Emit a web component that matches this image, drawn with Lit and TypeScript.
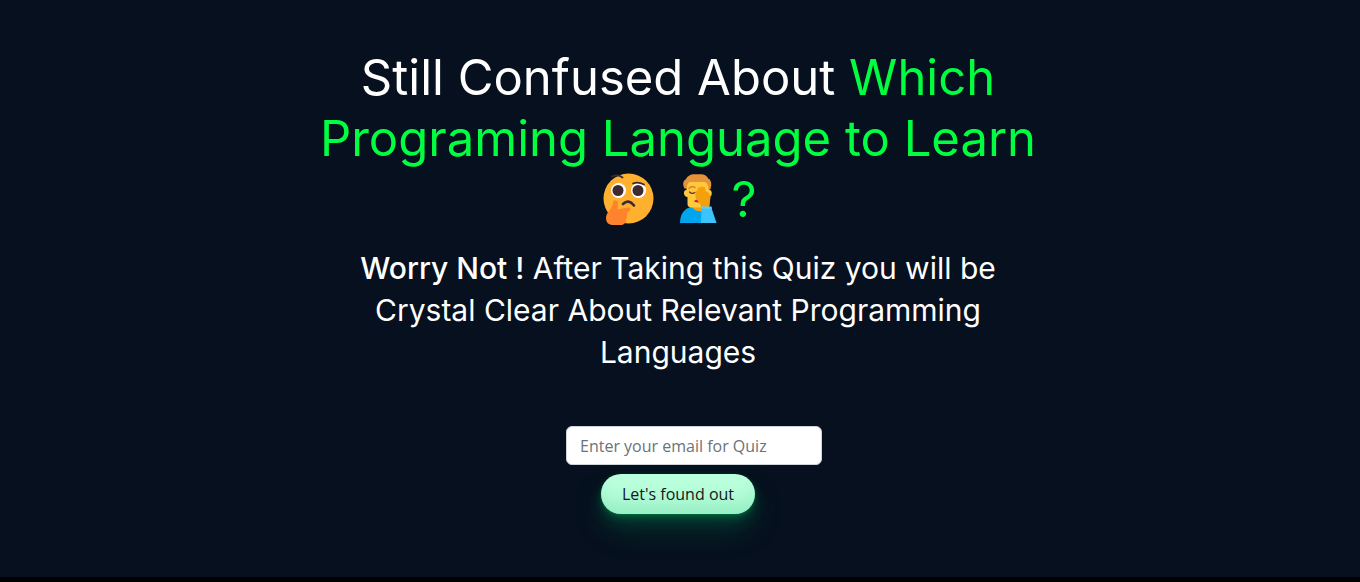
import { LitElement, html, css, svg } from "lit";
import { customElement } from "lit/decorators.js";

const thinking = svg`
  <circle cx="29.500" cy="28.500" r="25" fill="#ffb02e"/>
  <circle cx="19.500" cy="20.500" r="7.500" fill="#fff"/>
  <circle cx="39.500" cy="20.500" r="7.500" fill="#fff"/>
  <circle cx="19" cy="20.500" r="5.500" fill="#402a32"/>
  <circle cx="39" cy="20.500" r="5.500" fill="#402a32"/>
  <path d="M13 6.500Q19 4 23.500 7.500M34 13.500Q39 11.500 45 14.500" fill="none" stroke="#402a32" stroke-width="1.800" stroke-linecap="round"/>
  <path d="M24 34Q29.500 28.500 35 35.500" fill="none" stroke="#402a32" stroke-width="2.600" stroke-linecap="round"/>
  <path d="M14 32.500c0-3 4.800-3 5 .5l-.3 6.500 10-2c3-.5 3.400 3.200.8 4.200l-1.800.6c1.500 1 1.200 2.800-.2 3.500 1 1.200.6 2.800-.8 3.400 1 2-1 5.800-5.200 5.800h-7c-5 0-7.500-2.500-7.500-7 0-6 6.500-8.500 7-15.500z" fill="#ff822d"/>`;

const facepalm = svg`
  <path d="M11 53c0-11 6-16.500 16-16.500h8l8 3V53z" fill="#00a6ed"/>
  <path d="M23 34h14v4c-3 5-11 4-14-1z" fill="#f59f0a"/>
  <path d="M17.500 9h23v11c3 0 3 6.500 0 7v8c0 1.500-1 2.500-3 2.500H22c-2 0-3.500-1.500-3.500-3.500v-7c-4 0-5-7-1-7z" fill="#ffc83d"/>
  <path d="M15.500 18.500c-2.500-5-1-8 1.500-9.500 1.500-3 4-4.500 7-4.800h9c3 .3 5.500 2 6.500 4.800 3 1.500 3.500 5 2 10l-2 .5c0-4-1.500-7.500-4.500-7.500H22c-3 0-4 2.500-4 6.500z" fill="#e59238"/>
  <path d="M20 18.500Q22.500 15.500 26 17.500" fill="none" stroke="#e8823a" stroke-width="1.600" stroke-linecap="round"/>
  <path d="M20.500 22Q23 24.500 26 22.500" fill="none" stroke="#5c3028" stroke-width="1.200" stroke-linecap="round"/>
  <path d="M25 31.500q1.500-3 4.500-1v2.200z" fill="#bb1d45"/>
  <path d="M26.500 23c0-2.500 1-3.500 1.500-1.500l1-3.500c.6-1.500 2-1 1.900.4l.7-1.500c.7-1.300 2.300-.8 2.200.6.7-1.400 2.300-.7 2.300.8l.6 3.200c2 0 4.800 2.500 4.800 6L40 37h-8c0-5-5.500-6-5.500-11z" fill="#f4a00c"/>
  <path d="M32.500 36.500 42.500 38 47.500 53H32z" fill="#3cc4fa"/>
  <path d="M32 36.500h10.500l.5 2.200-11-.2z" fill="#5dcefb"/>`;

@customElement("app-root")
export class AppRoot extends LitElement {
  static styles = css`
    :host {
      display: flex;
      flex-direction: column;
      min-height: 100vh;
      background: #000;
      color: #fff;
      font-family: Inter, sans-serif;
    }
    * {
      box-sizing: border-box;
    }
    .hero {
      flex: 1;
      display: flex;
      flex-direction: column;
      align-items: center;
      margin-bottom: 5px;
      padding: 47px 20px 56px 16px;
      background: #06101e;
      text-align: center;
    }
    .title {
      max-width: 752px;
      margin: 0;
      font-family: Inter, sans-serif;
      font-size: 49px;
      font-weight: 400;
      line-height: 61px;
    }
    .accent {
      color: #00ff40;
    }
    .faces {
      display: inline-flex;
      gap: 16px;
      margin-right: 6px;
      vertical-align: -8px;
    }
    .emoji {
      width: 60px;
      height: 52px;
    }
    .emoji + .emoji {
      width: 50px;
    }
    .lead {
      max-width: 680px;
      margin: 17px 0 0;
      font-size: 30px;
      line-height: 42px;
    }
    .lead strong {
      font-weight: 500;
    }
    .form {
      display: flex;
      flex-direction: column;
      align-items: center;
      gap: 9px;
      margin-top: 53px;
    }
    .email {
      width: 256px;
      height: 39px;
      margin-left: 32px;
      padding: 6px 13px;
      border: 1px solid #ced4da;
      border-radius: 6px;
      background: #fff;
      color: #212529;
      font: 400 16px/24px "Open Sans", sans-serif;
    }
    .email::placeholder {
      color: #6c7278;
      opacity: 1;
    }
    .submit {
      height: 40px;
      padding: 7px 21px;
      border: 0;
      border-radius: 100px;
      background: #b9ffdc;
      box-shadow:
        rgba(44, 187, 120, 0.25) 0 -25px 18px -14px inset,
        rgba(0, 200, 110, 0.15) 0 1px 2px,
        rgba(0, 200, 110, 0.15) 0 2px 4px,
        rgba(0, 200, 110, 0.15) 0 4px 8px,
        rgba(0, 200, 110, 0.15) 0 8px 16px,
        rgba(0, 200, 110, 0.15) 0 16px 32px;
      color: #101820;
      font: 400 16px/24px "Open Sans", sans-serif;
      cursor: pointer;
    }
  `;

  render() {
    return html`
      <main class="hero">
        <h1 class="title">
          Still Confused About
          <span class="accent">
            Which Programing Language to Learn
            <span class="faces">
              <svg class="emoji" viewBox="0 3 60 52" role="img" aria-label="Thinking face">${thinking}</svg>
              <svg class="emoji" viewBox="6 3 50 52" role="img" aria-label="Face palm">${facepalm}</svg>
            </span>?
          </span>
        </h1>
        <p class="lead">
          <strong>Worry Not !</strong> After Taking this Quiz you will be Crystal
          Clear About Relevant Programming Languages
        </p>
        <form class="form" @submit=${(e: Event) => e.preventDefault()}>
          <input class="email" type="email" aria-label="Email" placeholder="Enter your email for Quiz" />
          <button class="submit" type="submit">Let's found out</button>
        </form>
      </main>
    `;
  }
}
